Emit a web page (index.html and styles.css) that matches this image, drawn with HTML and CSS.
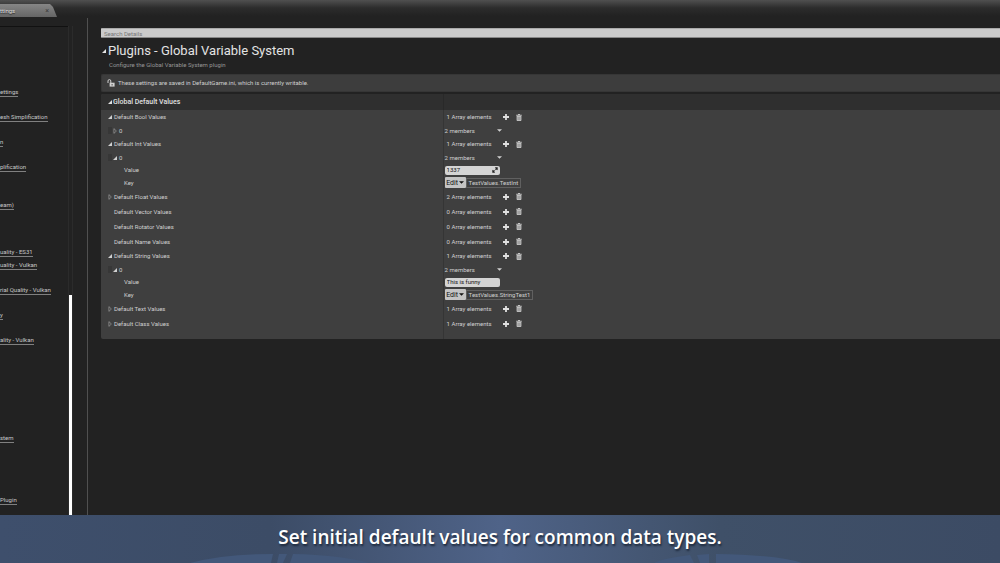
FILE: index.html
```html
<!DOCTYPE html>
<html lang="en">
<head>
<meta charset="utf-8">
<title>Project Settings</title>
<link rel="stylesheet" href="styles.css">
</head>
<body>
<svg class="defs" aria-hidden="true">
  <symbol id="open" viewBox="0 0 5 5"><path d="M5 0V5H0Z"/></symbol>
  <symbol id="closed" viewBox="0 0 4 6"><path d="M.9 .6 3.4 3 .9 5.4Z" fill="none" stroke="currentColor" stroke-width=".6"/></symbol>
  <symbol id="plus" viewBox="0 0 6 6"><path d="M2.1 0H3.9V2.1H6V3.9H3.9V6H2.1V3.9H0V2.1H2.1Z"/></symbol>
  <symbol id="trash" viewBox="0 0 6 7"><path d="M2 0H4V.7H5.8V1.7H.2V.7H2ZM.6 2.1H5.4V6.1Q5.4 7 4.6 7H1.4Q.6 7 .6 6.1Z"/><path d="M2.1 2.8V6.2M3.9 2.8V6.2" stroke="#555" stroke-width=".5"/></symbol>
  <symbol id="down" viewBox="0 0 5 3"><path d="M0 .2H5L2.5 2.8Z"/></symbol>
</svg>
<div class="app">
  <header class="tabs">
    <div class="tab"><span>ttings</span><button class="close" aria-label="Close tab">×</button></div>
  </header>
  <div class="body">
    <aside class="side">
      <nav class="links">
        <a href="#">ettings</a>
        <a href="#" class="g1">esh Simplification</a>
        <a href="#" class="g1">n</a>
        <a href="#" class="g1">plification</a>
        <a href="#" class="g2">eam)</a>
        <a href="#" class="g3">uality - ES31</a>
        <a href="#" class="g0">uality - Vulkan</a>
        <a href="#" class="g1">rial Quality - Vulkan</a>
        <a href="#" class="g1">y</a>
        <a href="#" class="g1">ality - Vulkan</a>
        <a href="#" class="g5">stem</a>
        <a href="#" class="g4">Plugin</a>
      </nav>
      <div class="track"><div class="thumb"></div></div>
    </aside>
    <main class="main">
      <input class="search" type="text" placeholder="Search Details" aria-label="Search Details">
      <h1 class="title"><svg class="arrow"><use href="#open"/></svg>Plugins - Global Variable System</h1>
      <p class="subtitle">Configure the Global Variable System plugin</p>
      <div class="notice">
        <svg class="lock" viewBox="0 0 8 8"><path d="M1 4V2Q1 .6 2.4 .6T3.8 2V4" fill="none" stroke="currentColor"/><path d="M2.6 3.7H7.6V7.6H2.6Z"/><path d="M5.1 5V6.5" stroke="#3d3d3d" stroke-width=".9"/></svg>
        <span>These settings are saved in DefaultGame.ini, which is currently writable.</span>
      </div>
      <section class="panel">
        <h2 class="row head"><span class="name"><svg class="arrow"><use href="#open"/></svg>Global Default Values</span><span class="val"></span></h2>

        <div class="row"><div class="name"><svg class="arrow"><use href="#open"/></svg>Default Bool Values</div><div class="val count"><span>1 Array elements</span><button aria-label="Add"><svg><use href="#plus"/></svg></button><button aria-label="Clear"><svg><use href="#trash"/></svg></button></div></div>
        <div class="row item"><div class="name"><i class="grip"></i><svg class="arrow closed"><use href="#closed"/></svg>0</div><div class="val members"><span>2 members</span><button aria-label="Options"><svg><use href="#down"/></svg></button></div></div>

        <div class="row"><div class="name"><svg class="arrow"><use href="#open"/></svg>Default Int Values</div><div class="val count"><span>1 Array elements</span><button aria-label="Add"><svg><use href="#plus"/></svg></button><button aria-label="Clear"><svg><use href="#trash"/></svg></button></div></div>
        <div class="row item"><div class="name"><i class="grip"></i><svg class="arrow"><use href="#open"/></svg>0</div><div class="val members"><span>2 members</span><button aria-label="Options"><svg><use href="#down"/></svg></button></div></div>
        <div class="row value"><label class="name" for="int-value">Value</label><div class="val"><div class="field"><input id="int-value" type="text" value="1337"><svg class="spin" viewBox="0 0 6 6"><path d="M2.8 .3H5.7V3.2L4.8 2.6 3.9 3.2 3.2 2.4 3.7 1.3ZM.3 2.8V5.7H3.2L2.3 4.7 2.8 3.6 2.1 2.9 1.2 3.4Z"/></svg></div></div></div>
        <div class="row key"><div class="name">Key</div><div class="val"><button class="edit">Edit<svg><use href="#down"/></svg></button><span class="tag">TestValues.TestInt</span></div></div>

        <div class="row tall"><div class="name"><svg class="arrow closed"><use href="#closed"/></svg>Default Float Values</div><div class="val count"><span>2 Array elements</span><button aria-label="Add"><svg><use href="#plus"/></svg></button><button aria-label="Clear"><svg><use href="#trash"/></svg></button></div></div>
        <div class="row tall"><div class="name"><i class="arrow"></i>Default Vector Values</div><div class="val count"><span>0 Array elements</span><button aria-label="Add"><svg><use href="#plus"/></svg></button><button aria-label="Clear"><svg><use href="#trash"/></svg></button></div></div>
        <div class="row tall"><div class="name"><i class="arrow"></i>Default Rotator Values</div><div class="val count"><span>0 Array elements</span><button aria-label="Add"><svg><use href="#plus"/></svg></button><button aria-label="Clear"><svg><use href="#trash"/></svg></button></div></div>
        <div class="row tall"><div class="name"><i class="arrow"></i>Default Name Values</div><div class="val count"><span>0 Array elements</span><button aria-label="Add"><svg><use href="#plus"/></svg></button><button aria-label="Clear"><svg><use href="#trash"/></svg></button></div></div>

        <div class="row"><div class="name"><svg class="arrow"><use href="#open"/></svg>Default String Values</div><div class="val count"><span>1 Array elements</span><button aria-label="Add"><svg><use href="#plus"/></svg></button><button aria-label="Clear"><svg><use href="#trash"/></svg></button></div></div>
        <div class="row item"><div class="name"><i class="grip"></i><svg class="arrow"><use href="#open"/></svg>0</div><div class="val members"><span>2 members</span><button aria-label="Options"><svg><use href="#down"/></svg></button></div></div>
        <div class="row value"><label class="name" for="string-value">Value</label><div class="val"><div class="field"><input id="string-value" type="text" value="This is funny"></div></div></div>
        <div class="row key"><div class="name">Key</div><div class="val"><button class="edit">Edit<svg><use href="#down"/></svg></button><span class="tag">TestValues.StringTest1</span></div></div>

        <div class="row tall"><div class="name"><svg class="arrow closed"><use href="#closed"/></svg>Default Text Values</div><div class="val count"><span>1 Array elements</span><button aria-label="Add"><svg><use href="#plus"/></svg></button><button aria-label="Clear"><svg><use href="#trash"/></svg></button></div></div>
        <div class="row tall"><div class="name"><svg class="arrow closed"><use href="#closed"/></svg>Default Class Values</div><div class="val count"><span>1 Array elements</span><button aria-label="Add"><svg><use href="#plus"/></svg></button><button aria-label="Clear"><svg><use href="#trash"/></svg></button></div></div>
        <div class="row foot"><span class="name"></span><span class="val"></span></div>
      </section>
    </main>
  </div>
  <footer class="caption">
    <svg class="mark" viewBox="0 0 620 9" aria-hidden="true"><path d="M0 9Q35 0 83 0L81 9ZM89 0H97L93 9H87ZM103 0Q150 1 180 9H100ZM464 9Q470 5 500 1L504 9ZM507 1 519 0V9H510ZM526 0Q590 1 612 9H526Z"/></svg>
    <p>Set initial default values for common data types.</p>
  </footer>
</div>
</body>
</html>
```
FILE: styles.css
```css
* { box-sizing: border-box; }
body { margin: 0; background: #222; color: #d0d0d0; font: 6px/8px Roboto, "Liberation Sans", sans-serif; }
h1, h2, p { margin: 0; }
svg { display: block; fill: currentColor; }
button { display: flex; align-items: center; justify-content: center; margin: 0; padding: 0; border: 0; background: none; color: inherit; font: inherit; }
input { font: inherit; }
.defs { position: absolute; width: 0; height: 0; }

.app { display: flex; flex-direction: column; min-height: 100vh; background: linear-gradient(#505050, #2c2c2c 8px, #222 16px); }
.tabs { display: flex; padding-top: 4px; height: 18px; }
.tab { display: flex; align-items: center; justify-content: space-between; width: 57px; height: 13px; padding-right: 8px; background: linear-gradient(#868686, #656565); clip-path: polygon(0 0, 50px 0, 53px 3px, 57px 100%, 0 100%); color: #ddd; text-shadow: 0 1px 1px #222; }
.close { color: #3c3c3c; font-size: 7px; text-shadow: none; }

.body { display: flex; flex: 1; }
.side { display: flex; width: 88px; padding-top: 8px; border-right: 1px solid #505050; }
.links { display: flex; flex-direction: column; align-items: flex-start; width: 68px; padding-top: 61px; border-top: 1px solid #111; white-space: nowrap; }
.links a { height: 9px; margin-bottom: 3px; border-bottom: 1px solid #808080; color: #c8c8c8; line-height: 8px; text-decoration: none; }
.links .g0 { margin-top: 1px; }
.links .g1 { margin-top: 13px; }
.links .g2 { margin-top: 26px; }
.links .g3 { margin-top: 35px; }
.links .g4 { margin-top: 50px; }
.links .g5 { margin-top: 86px; }
.track { display: flex; flex-direction: column; justify-content: flex-end; width: 5px; border: solid #2b2b2b; border-width: 0 1px; }
.thumb { height: 45%; background: #fff; }

.main { flex: 1; min-width: 0; padding: 10px 0 0 13px; }
.search { display: block; width: 100%; height: 10px; padding: 0 3px; border: 0; border-top: 1px solid #aaa; border-bottom: 1px solid #888; border-radius: 1px 0 0 1px; background: #cbcbcb; color: #333; }
.search::placeholder { color: #777; opacity: 1; }
.title { display: flex; align-items: center; margin-top: 5px; color: #e4e4e4; font-size: 13px; font-weight: 400; line-height: 16px; }
.title .arrow { width: 4px; height: 4px; margin: 0 2px 0 1px; }
.subtitle { margin: 2px 0 5px 8px; color: #969696; }
.notice { display: flex; align-items: center; gap: 3px; height: 18px; padding: 0 0 1px 5px; border: 1px solid #363636; border-right: 0; border-radius: 2px 0 0 2px; background: #3d3d3d; }
.lock { width: 8px; height: 8px; }

.panel { margin-top: 2px; border-radius: 2px 0 0 2px; overflow: hidden; background: #3f3f3f; }
.row { display: grid; grid-template-columns: 38% 1fr; height: 14px; }
.name, .val { display: flex; align-items: center; white-space: nowrap; }
.name { padding-left: 7px; }
.val { padding-left: 1px; border-left: 1px solid #353535; }
.arrow { width: 4px; height: 4px; margin-right: 2px; }
.closed { height: 6px; color: #aaa; }
.head { height: 16px; background: #2f2f2f; color: #e0e0e0; font-size: 7px; font-weight: 500; }
.head .val { border-color: #292929; }
.head .arrow { margin-right: 1px; }
.item { height: 13px; }
.item .arrow { margin-left: 1px; }
.grip { width: 4px; height: 7px; background: #373737; }
.value { height: 12px; }
.value .name, .key .name { padding-left: 23px; }
.key { height: 13px; }
.tall { height: 15px; }
.foot { height: 8px; }
.count { padding-left: 3px; }
.count span { width: 56px; }
.count button { width: 6px; height: 8px; margin-right: 7px; color: #e0e0e0; }
.count svg { width: 6px; height: 6px; }
.count button:last-child svg { height: 7px; color: #c4c4c4; }
.members span { width: 52px; }
.members svg { width: 5px; height: 3px; }
.field { display: flex; align-items: center; width: 55px; height: 9px; padding: 0 2px; border-radius: 2px; background: #d4d4d4; color: #222; }
.field input { flex: 1; min-width: 0; height: 8px; padding: 0; border: 0; background: none; color: #111; }
.spin { width: 6px; height: 6px; }
.edit { gap: 1px; width: 21px; height: 11px; border-radius: 1px; background: #c4c4c4; color: #111; font-size: 7px; }
.edit svg { width: 5px; height: 3px; }
.tag { height: 10px; padding: 0 2px; border: 1px solid #606060; }

.caption { position: relative; display: flex; align-items: center; justify-content: center; height: 48px; padding-bottom: 4px; background: linear-gradient(90deg, #3e4f6c, #3c4c66 27%, #4f6388 50%, #3f5068 72%, #3c4b64); color: #fff; font: 600 19px/24px "Open Sans", "Noto Sans", sans-serif; text-shadow: 1px 2px 2px #1d293c; }
.mark { position: absolute; left: 19%; bottom: 0; width: 62%; height: 9px; fill: #43587a; }
.caption p { position: relative; }
```
